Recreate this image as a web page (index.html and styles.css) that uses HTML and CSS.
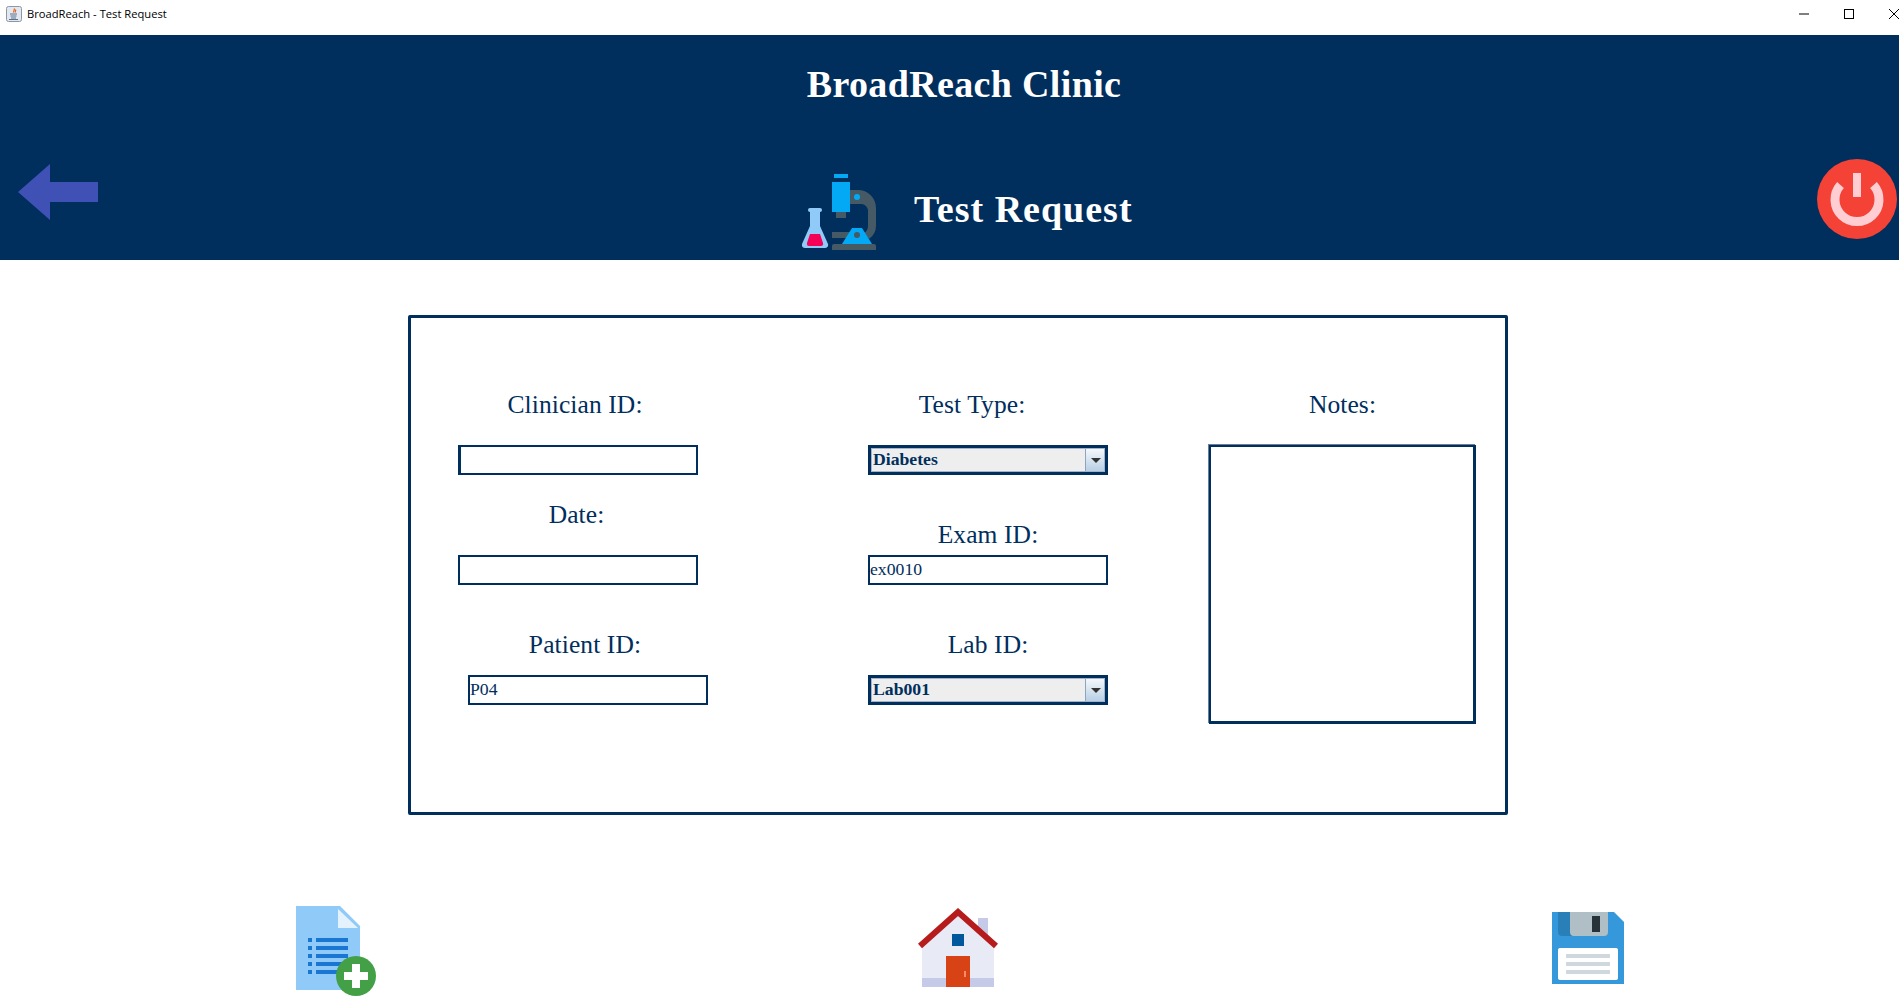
FILE: index.html
```html
<!DOCTYPE html>
<html lang="en">
<head>
    <meta charset="UTF-8">
    <title>BroadReach - Test Request</title>
    <link rel="stylesheet" href="styles.css">
</head>
<body>

<div class="titlebar">
    <svg class="app-icon" width="16" height="16" viewBox="0 0 16 16">
        <rect x="0.5" y="0.5" width="15" height="15" rx="2" fill="#e4e8ee" stroke="#8a97a8"/>
        <path d="M8 2.500c1.500 1.500-1.500 2.500 0 4M9.500 3.500c.8 1-.8 1.800 0 3" fill="none" stroke="#e2641c" stroke-width="1.200"/>
        <path d="M4 8h7M4.500 10h6M5 12h5M3 13.500h9" fill="none" stroke="#56728f" stroke-width="1"/>
    </svg>
    <span class="window-title">BroadReach - Test Request</span>
    <div class="window-buttons">
        <svg width="10" height="10" viewBox="0 0 10 10"><path d="M0 5h10" stroke="#000" stroke-width="1"/></svg>
        <svg width="10" height="10" viewBox="0 0 10 10"><rect x="0.5" y="0.5" width="9" height="9" fill="none" stroke="#000"/></svg>
        <svg width="10" height="10" viewBox="0 0 10 10"><path d="M0 0l10 10M10 0L0 10" stroke="#000" stroke-width="1"/></svg>
    </div>
</div>

<header class="header">
    <h1 class="clinic-name">BroadReach Clinic</h1>
    <div class="header-row">
        <svg class="back-icon" width="80" height="56" viewBox="0 0 80 56">
            <path d="M0 28L32 0v18h48v20H32v18z" fill="#3f51b5"/>
        </svg>
        <div class="page-heading">
            <svg width="74" height="76" viewBox="0 0 74 76">
                <path d="M48 16h8a18 18 0 0 1 18 18v18a16 16 0 0 1-7 13l-5-6a8 8 0 0 0 4-7V36a8 8 0 0 0-6-6H48z" fill="#455a64"/>
                <rect x="34" y="38" width="10" height="6" fill="#455a64"/>
                <rect x="32" y="0" width="14" height="4" fill="#03a9f4"/>
                <rect x="30" y="8" width="18" height="30" fill="#03a9f4"/>
                <circle cx="55" cy="23" r="3" fill="#03a9f4"/>
                <rect x="30" y="58" width="18" height="6" fill="#455a64"/>
                <path d="M40 70l10-16h10l10 16z" fill="#03a9f4"/>
                <circle cx="55" cy="61" r="3" fill="#455a64"/>
                <path d="M32 70h40a2 2 0 0 1 2 2v4H30v-4a2 2 0 0 1 2-2z" fill="#455a64"/>
                <rect x="6" y="34" width="14" height="4" rx="2" fill="#90caf9"/>
                <path d="M8 38h10v14l8 18c.6 2-.6 4-3 4H3c-2.400 0-3.600-2-3-4l8-18z" fill="#90caf9"/>
                <path d="M8 60h10l3 9c.5 2-.5 3-2 3H7c-1.500 0-2.500-1-2-3z" fill="#f50057"/>
            </svg>
            <h2 class="page-title">Test Request</h2>
        </div>
        <svg class="power-icon" width="80" height="80" viewBox="0 0 80 80">
            <circle cx="40" cy="40" r="40" fill="#f44336"/>
            <path d="M23.500 26a22 22 0 1 0 33 0" fill="none" stroke="#ffcdd2" stroke-width="9"/>
            <rect x="36" y="14" width="8" height="24" fill="#ffcdd2"/>
        </svg>
    </div>
</header>

<main class="panel">
    <div class="col col-left">
        <div class="field">
            <label class="label label-gap">Clinician ID:</label>
            <input class="text-input focused" type="text">
        </div>
        <div class="field field-date">
            <label class="label label-gap label-date">Date:</label>
            <input class="text-input" type="text">
        </div>
        <div class="field field-patient">
            <label class="label">Patient ID:</label>
            <input class="text-input" type="text" value="P04">
        </div>
    </div>
    <div class="col col-middle">
        <div class="field">
            <label class="label label-gap label-test">Test Type:</label>
            <div class="combo"><span class="combo-value">Diabetes</span><span class="combo-btn"></span></div>
        </div>
        <div class="field field-exam">
            <label class="label label-tight">Exam ID:</label>
            <input class="text-input" type="text" value="ex0010">
        </div>
        <div class="field field-lab">
            <label class="label">Lab ID:</label>
            <div class="combo"><span class="combo-value">Lab001</span><span class="combo-btn"></span></div>
        </div>
    </div>
    <div class="col col-right">
        <label class="label label-gap">Notes:</label>
        <textarea class="notes"></textarea>
    </div>
</main>

<footer class="actions">
    <!-- new request -->
    <svg class="icon-new" width="80" height="90" viewBox="0 0 80 90">
        <path d="M0 0h44l20 20v64H0z" fill="#90caf9"/>
        <path d="M42 3l20 19H42z" fill="#e3f2fd"/>
        <path d="M12 32h4v4h-4zM12 40h4v4h-4zM12 48h4v4h-4zM12 56h4v4h-4zM12 64h4v4h-4zM20 32h32v4H20zM20 40h32v4H20zM20 48h32v4H20zM20 56h32v4H20zM20 64h32v4H20z" fill="#1976d2"/>
        <circle cx="60" cy="70" r="20" fill="#43a047"/>
        <path d="M56 58h8v8h8v8h-8v8h-8v-8h-8v-8h8z" fill="#fff"/>
    </svg>
    <!-- home -->
    <svg class="icon-home" width="80" height="80" viewBox="0 0 80 80">
        <rect x="60" y="10" width="10" height="20" fill="#c5cae9"/>
        <path d="M4 38L40 6l36 32v41H4z" fill="#e8eaf6"/>
        <rect x="4" y="70" width="72" height="9" fill="#c5cae9"/>
        <path d="M2 38L40 4l38 34" fill="none" stroke="#b71c1c" stroke-width="6"/>
        <rect x="34" y="26" width="12" height="12" fill="#01579b"/>
        <rect x="28" y="48" width="24" height="31" fill="#d84315"/>
        <rect x="46" y="63" width="2" height="6" fill="#ff8a65"/>
    </svg>
    <!-- save -->
    <svg class="icon-save" width="72" height="72" viewBox="0 0 72 72">
        <path d="M0 0h62l10 10v62H0z" fill="#3498db"/>
        <path d="M6 0h14v24H10a4 4 0 0 1-4-4z" fill="#2980b9"/>
        <path d="M18 0h38v20a4 4 0 0 1-4 4H22a4 4 0 0 1-4-4z" fill="#b0bec5"/>
        <rect x="40" y="4" width="8" height="16" fill="#263238"/>
        <rect x="6" y="36" width="60" height="32" rx="2" fill="#fff"/>
        <path d="M14 42h44v4H14zM14 50h44v4H14zM14 58h44v4H14z" fill="#cfd8dc"/>
    </svg>
</footer>

</body>
</html>
```

FILE: styles.css
```css
body {
    margin: 0;
    height: 1005px;
    overflow: hidden;
    background-color: white;
    font-family: "Liberation Serif", serif;
    color: #002e5d;
}

/* window title bar */
.titlebar {
    display: flex;
    align-items: flex-start;
    height: 35px;
    padding: 6px 0 0 6px;
    box-sizing: border-box;
    color: black;
}
.app-icon {
    margin-right: 5px;
}
.window-title {
    font-family: "Open Sans", sans-serif;
    font-size: 11.200px;
    line-height: 16px;
}
.window-buttons {
    display: flex;
    gap: 35px;
    margin: 3px 0 0 auto;
}

/* blue header */
.header {
    height: 225px;
    background-color: #002e5d;
    color: white;
    overflow: hidden;
}
.clinic-name {
    margin: 24px 0 0;
    padding-left: 29px;
    font-size: 38px;
    line-height: 50px;
    text-align: center;
    letter-spacing: 0.350px;
}
.header-row {
    display: flex;
    align-items: flex-start;
    margin-top: 50px;
    padding: 0 2px 0 18px;
}
.back-icon {
    margin-top: 5px;
}
.page-heading {
    display: flex;
    gap: 38px;
    margin-top: 15px;
    margin-left: 704px;
}
.page-title {
    margin: 14px 0 0;
    font-size: 38px;
    line-height: 42px;
    letter-spacing: 1px;
}
.power-icon {
    margin-left: auto;
}

/* form panel */
.panel {
    box-sizing: border-box;
    display: flex;
    width: 1100px;
    height: 500px;
    margin: 55px 0 0 408px;
    padding: 72px 0 0 47px;
    border: 3px solid #002e5d;
    border-radius: 2px;
}
.col-left {
    width: 410px;
}
.col-middle {
    width: 340px;
}
.col-right {
    width: 267px;
    margin-left: 1px;
}
.field {
    width: 240px;
}
.field-date {
    margin-top: 25px;
}
.field-patient {
    margin: 45px 0 0 10px;
}
.field-exam {
    margin-top: 45px;
}
.field-lab {
    margin-top: 45px;
}
.label {
    display: block;
    height: 30px;
    margin-bottom: 15px;
    font-size: 25.500px;
    line-height: 30px;
    text-align: center;
    letter-spacing: 0.100px;
}
.label-gap {
    margin-bottom: 25px;
}
.label-tight {
    margin-bottom: 5px;
}
.label-test {
    padding-right: 32px;
}
.col-left .label {
    padding-right: 6px;
}
.col-left .label-date {
    padding-right: 3px;
}
.text-input {
    box-sizing: border-box;
    display: block;
    width: 240px;
    height: 30px;
    padding: 0 0 2px;
    border: 2px solid #002e5d;
    border-radius: 0;
    outline: none;
    background-color: white;
    font-family: "Liberation Serif", serif;
    font-size: 17.700px;
    color: #002e5d;
}
.focused {
    box-shadow: inset 1px 0 0 #002e5d;
}
.combo {
    box-sizing: border-box;
    display: flex;
    width: 240px;
    height: 30px;
    border: 3px solid #002e5d;
    outline: 1px solid #a3b4c8;
    outline-offset: -4px;
    background-color: #eeeeee;
    font-weight: bold;
    font-size: 17.700px;
}
.combo-value {
    flex: 1;
    padding-left: 2px;
    line-height: 23px;
}
.combo-btn {
    position: relative;
    width: 18px;
    margin: 1px;
    border-left: 1px solid #8ea4bd;
    background: linear-gradient(#f4f8fb, #b8cfe5);
}
/* little down arrow on the combo button */
.combo-btn::after {
    content: "";
    position: absolute;
    top: 9px;
    left: 5px;
    border-style: solid;
    border-width: 5px 5px 0;
    border-color: #333 transparent transparent;
}
.notes {
    box-sizing: border-box;
    display: block;
    width: 267px;
    height: 279px;
    margin-top: 1px;
    padding: 0;
    border: 2px solid #002e5d;
    border-right-width: 3px;
    border-bottom-width: 3px;
    border-radius: 0;
    outline: none;
    resize: none;
    box-shadow: -1px -1px 0 #6a7f97;
}

/* bottom icons */
.actions {
    display: flex;
    align-items: flex-start;
    margin-top: 91px;
    padding-left: 296px;
}
.icon-new {
    margin-right: 542px;
}
.icon-home {
    margin-top: 2px;
    margin-right: 554px;
}
.icon-save {
    margin-top: 6px;
}
```
